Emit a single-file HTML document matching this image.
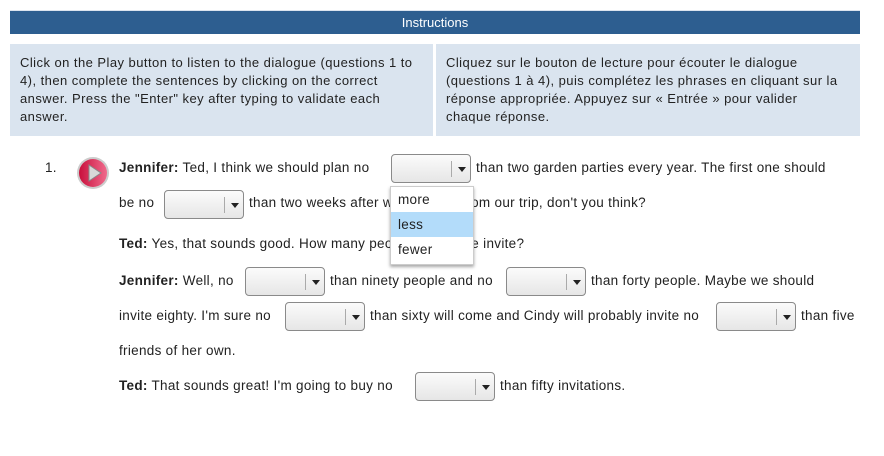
<!DOCTYPE html>
<html><head><meta charset="utf-8"><style>
body{margin:0;width:884px;height:456px;background:#fff;font-family:"Liberation Sans","DejaVu Sans",sans-serif;color:#222;position:relative;overflow:hidden}
.hdr{position:absolute;left:10px;top:10px;width:850px;height:23px;background:#2d5e90;color:#fff;font-size:13px;text-align:center;line-height:23px;border-top:1px solid #dbe4ef}
.box{position:absolute;top:44px;height:92px;background:#dae4ef;font-size:13px;line-height:18px;box-sizing:border-box;padding:10px 10px;letter-spacing:0.45px;white-space:nowrap}
.t{position:absolute;font-size:13.5px;white-space:nowrap;line-height:18px;letter-spacing:0.3px}
.sel{position:absolute;width:80px;height:29px;border:1px solid #8a8a8a;border-radius:4px;background:linear-gradient(#fbfbfb,#e6e6e6);box-sizing:border-box}
.sel:before{content:"";position:absolute;left:59px;top:6px;height:16px;border-left:1px solid #aaa}
.sel:after{content:"";position:absolute;left:66px;top:12px;border-left:4px solid transparent;border-right:4px solid transparent;border-top:5px solid #222}
.dd{position:absolute;left:390px;top:186px;width:82px;height:77px;background:#fff;border:1px solid #ccc;box-shadow:0 2px 3px rgba(0,0,0,.35);font-size:13.5px;letter-spacing:.3px}
.dd div{height:25px;line-height:25px;padding-left:7px}
</style></head><body>
<div class="hdr">Instructions</div>
<div class="box" style="left:10px;width:423px">Click on the Play button to listen to the dialogue (questions 1 to<br>4), then complete the sentences by clicking on the correct<br>answer. Press the "Enter" key after typing to validate each<br>answer.</div>
<div class="box" style="left:436px;width:424px">Cliquez sur le bouton de lecture pour écouter le dialogue<br>(questions 1 à 4), puis complétez les phrases en cliquant sur la<br>réponse appropriée. Appuyez sur « Entrée » pour valider<br>chaque réponse.</div>

<div class="t" style="left:45px;top:159px">1.</div>
<svg style="position:absolute;left:76px;top:156px" width="34" height="34"><defs><linearGradient id="g" x1="0" x2="1"><stop offset="0" stop-color="#c8103c"/><stop offset="1" stop-color="#f06a8c"/></linearGradient></defs><circle cx="17" cy="17" r="16" fill="#ccc"/><circle cx="17" cy="17" r="14" fill="url(#g)"/><path d="M13 9 L25 17 L13 25 Z" fill="#d8d8d8" stroke="#888" stroke-width="1"/></svg>

<div class="t" style="left:119px;top:159px"><b>Jennifer:</b> Ted, I think we should plan no</div>
<div class="sel" style="left:391px;top:154px"></div>
<div class="t" style="left:476px;top:159px">than two garden parties every year. The first one should</div>

<div class="t" style="left:119px;top:194px">be no</div>
<div class="sel" style="left:164px;top:190px"></div>
<div class="t" style="left:249px;top:194px">than two weeks after we get back from our trip, don't you think?</div>

<div class="t" style="left:119px;top:235px"><b>Ted:</b> Yes, that sounds good. How many people should we invite?</div>

<div class="t" style="left:119px;top:272px"><b>Jennifer:</b> Well, no</div>
<div class="sel" style="left:245px;top:267px"></div>
<div class="t" style="left:330px;top:272px">than ninety people and no</div>
<div class="sel" style="left:506px;top:267px"></div>
<div class="t" style="left:591px;top:272px">than forty people. Maybe we should</div>

<div class="t" style="left:119px;top:307px">invite eighty. I'm sure no</div>
<div class="sel" style="left:285px;top:302px"></div>
<div class="t" style="left:370px;top:307px">than sixty will come and Cindy will probably invite no</div>
<div class="sel" style="left:716px;top:302px"></div>
<div class="t" style="left:801px;top:307px">than five</div>

<div class="t" style="left:119px;top:342px">friends of her own.</div>

<div class="t" style="left:119px;top:377px"><b>Ted:</b> That sounds great! I'm going to buy no</div>
<div class="sel" style="left:415px;top:372px"></div>
<div class="t" style="left:500px;top:377px">than fifty invitations.</div>

<div class="dd"><div>more</div><div style="background:#b3dcfa">less</div><div>fewer</div></div>
</body></html>
